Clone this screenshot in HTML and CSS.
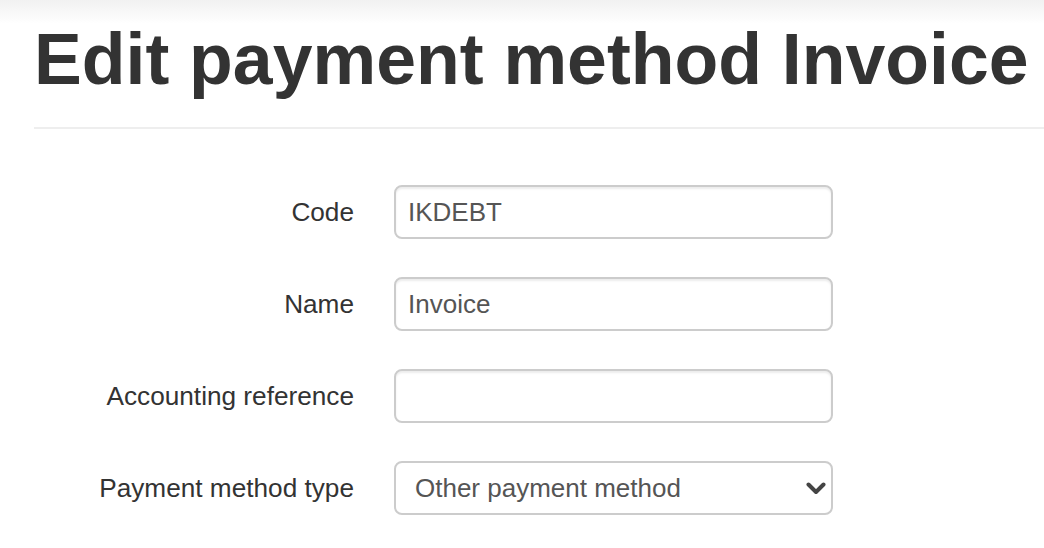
FILE: index.html
```html
<!DOCTYPE html>
<html lang="en">
<head>
<meta charset="utf-8">
<title>Edit payment method Invoice</title>
<link rel="stylesheet" href="styles.css">
</head>
<body>
<div class="page">
  <h1 class="title">Edit payment method Invoice</h1>
  <hr class="rule">
  <form class="form">
    <label class="label" for="code">Code</label>
    <input class="control" id="code" type="text" value="IKDEBT">
    <label class="label" for="name">Name</label>
    <input class="control" id="name" type="text" value="Invoice">
    <label class="label" for="ref">Accounting reference</label>
    <input class="control" id="ref" type="text" value="">
    <label class="label" for="type">Payment method type</label>
    <div class="select-wrap">
      <select class="control select" id="type">
        <option>Other payment method</option>
      </select>
      <svg class="chevron" width="20" height="13" viewBox="0 0 20 13"><path d="M2.5 2.5 L10 10 L17.5 2.5" fill="none" stroke="#444" stroke-width="4" stroke-linecap="round" stroke-linejoin="round"/></svg>
    </div>
  </form>
</div>
</body>
</html>
```

FILE: styles.css
```css
html, body {
  margin: 0;
  padding: 0;
}
body {
  background: #fff linear-gradient(#f1f1f1, #ffffff 24px) no-repeat;
  font-family: "Liberation Sans", Arial, Helvetica, sans-serif;
  color: #333;
}
.page {
  padding-left: 34px;
}
.title {
  margin: 20px 0 0 0;
  font-size: 71.6px;
  line-height: 78px;
  font-weight: bold;
  color: #333;
  white-space: nowrap;
}
.rule {
  margin: 29px 0 0 0;
  border: 0;
  border-top: 2px solid #eee;
  height: 0;
}
.form {
  margin-top: 56px;
  display: grid;
  grid-template-columns: 320px 439px;
  column-gap: 40px;
  row-gap: 38px;
  align-items: center;
}
.label {
  text-align: right;
  font-size: 26.2px;
  color: #333;
}
.control {
  box-sizing: border-box;
  width: 439px;
  height: 54px;
  margin: 0;
  padding: 0 12px;
  border: 2px solid #ccc;
  border-radius: 8px;
  background: #fff;
  box-shadow: inset 0 2px 2px rgba(0,0,0,0.075);
  font-family: "Liberation Sans", Arial, Helvetica, sans-serif;
  font-size: 26px;
  color: #555;
  outline: none;
}
.select-wrap {
  position: relative;
  width: 439px;
  height: 54px;
}
.select {
  appearance: none;
  -webkit-appearance: none;
  padding-left: 19px;
  box-shadow: none;
}
.chevron {
  position: absolute;
  right: 7px;
  top: 21px;
  pointer-events: none;
}
```
